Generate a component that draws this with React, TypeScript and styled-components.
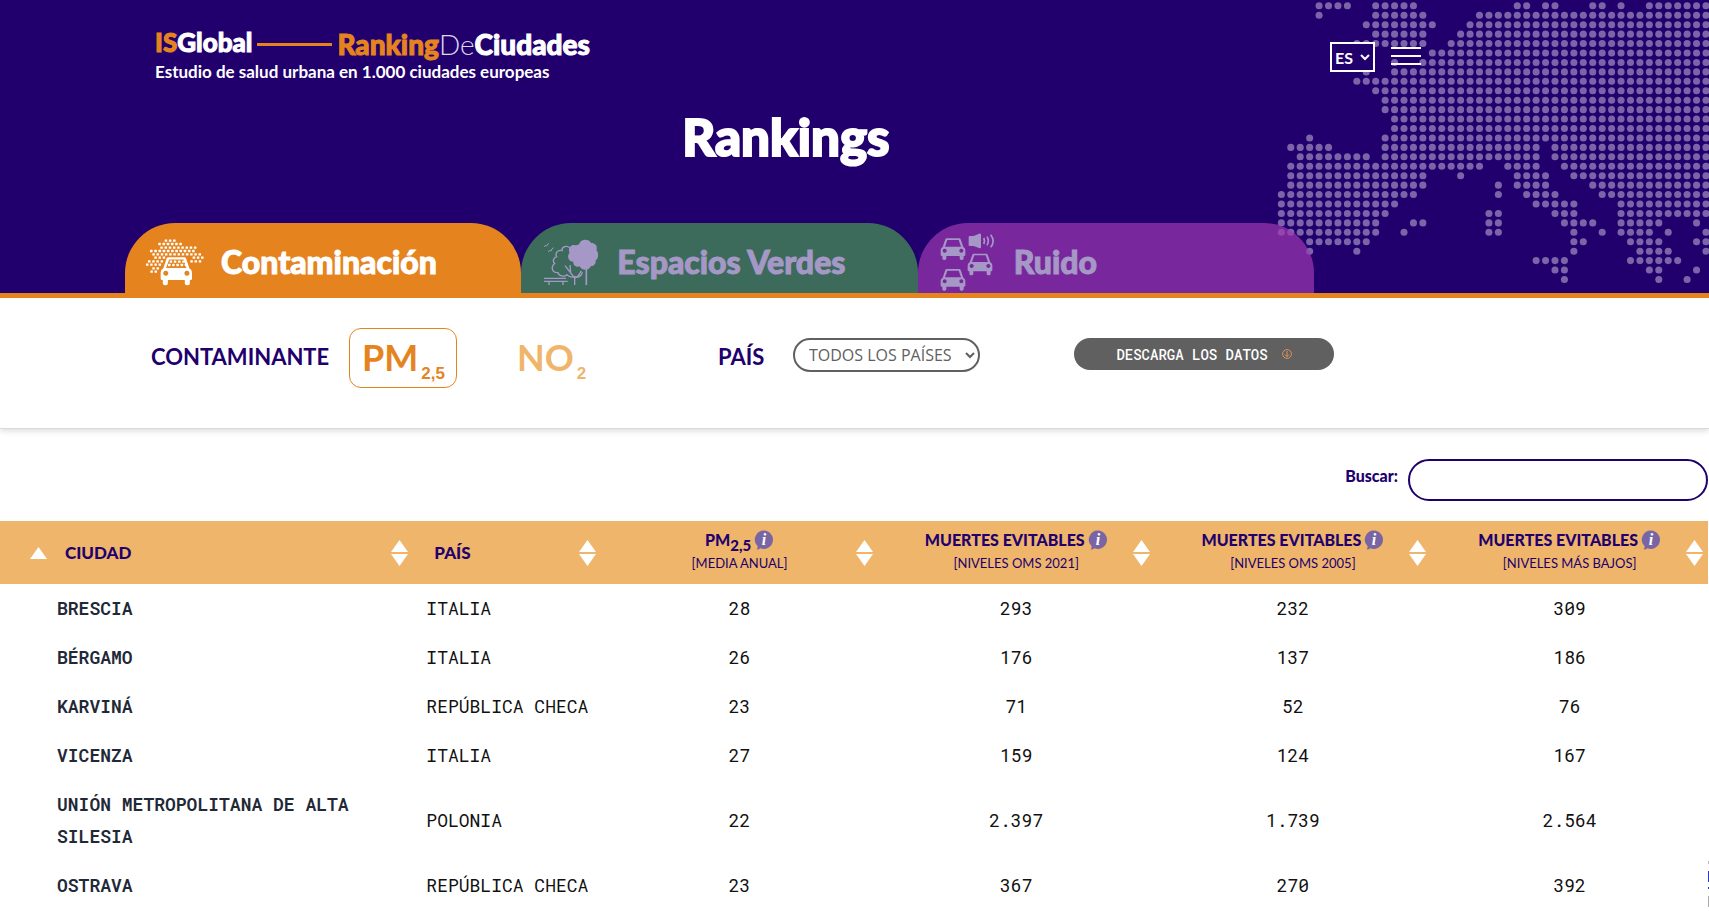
import React from "react";
import styled, { createGlobalStyle } from "styled-components";

const NAVY = "#21006d";
const ORANGE = "#e5841f";
const SAND = "#efb56b";
const LILAC = "#a598c6";
const SANS = `Lato, "Open Sans", sans-serif`;
const MONO = `"Roboto Mono", "DejaVu Sans Mono", monospace`;

const GlobalStyle = createGlobalStyle`
  *, *::before, *::after { box-sizing: border-box; }
  html { overflow: hidden auto; scrollbar-width: none; }
  body { margin: 0; background: #fff; color: ${NAVY}; font-family: ${SANS}; }
  button, select, input { font-family: inherit; margin: 0; }
`;

/* ---------- header ---------- */

const Header = styled.header`
  position: relative;
  overflow: hidden;
  background: ${NAVY};
  border-bottom: 5px solid ${ORANGE};
`;

const MapArt = styled.svg`
  position: absolute;
  top: 0;
  right: 0;
`;

const TopBar = styled.div`
  position: relative;
  display: flex;
  justify-content: space-between;
  align-items: flex-start;
  max-width: 1421px;
  padding: 28px 0 0 155px;
`;

const Brand = styled.a`
  display: block;
  color: #fff;
  text-decoration: none;
`;

const BrandLine = styled.span`
  display: flex;
  align-items: center;
  height: 32px;
  line-height: 32px;
  font-weight: 900;
  font-size: 28px;
`;

const BrandOwner = styled.span`
  font-size: 26px;
  line-height: 28px;
  height: 32px;
  -webkit-text-stroke: 1px;
`;

const Accent = styled.span`
  color: ${ORANGE};
`;

const Heavy = styled.span`
  -webkit-text-stroke: 1px;
`;

const Thin = styled.span`
  font-weight: 300;
  color: #dcd9ee;
`;

const BrandRule = styled.span`
  width: 75px;
  height: 3px;
  margin: 0 5px;
  background: ${ORANGE};
`;

const Tagline = styled.span`
  display: block;
  font-size: 17px;
  line-height: 24px;
  font-weight: 700;
`;

const Controls = styled.div`
  display: flex;
  align-items: center;
  gap: 16px;
  padding-top: 14px;
`;

const Language = styled.div`
  position: relative;
  display: flex;
  align-items: center;

  svg { position: absolute; right: 4px; pointer-events: none; }
`;

const LanguageSelect = styled.select`
  appearance: none;
  width: 45px;
  height: 30px;
  padding: 0 0 0 3px;
  border: 2px solid #fff;
  border-radius: 0;
  background: ${NAVY};
  color: #fff;
  font-size: 16px;
  font-weight: 700;
`;

const MenuButton = styled.button`
  display: grid;
  gap: 6px;
  width: 30px;
  padding: 0 0 2px;
  border: 0;
  background: none;
  cursor: pointer;

  span { height: 2px; background: #fff; }
`;

const Title = styled.h1`
  position: relative;
  max-width: 1572px;
  margin: 23px 0 0;
  color: #fff;
  font-size: 51px;
  line-height: 60px;
  font-weight: 900;
  text-align: center;
  -webkit-text-stroke: 2px;
`;

const Tabs = styled.nav`
  position: relative;
  display: grid;
  grid-template-columns: repeat(3, 1fr);
  max-width: 1314px;
  padding: 0 0 0 125px;
  margin-top: 56px;
`;

const Tab = styled.a<{ $bg: string; $fg: string }>`
  display: flex;
  align-items: center;
  height: 70px;
  padding: 8px 0 0 21px;
  gap: 16px;
  border-radius: 50px 50px 0 0;
  background: ${(p) => p.$bg};
  color: ${(p) => p.$fg};
  font-size: 32px;
  line-height: 40px;
  font-weight: 900;
  text-decoration: none;
  white-space: nowrap;
  -webkit-text-stroke: 1px;

  svg { flex: none; }
`;

/* ---------- filters ---------- */

const Filters = styled.section`
  display: grid;
  grid-template-columns: 198px 155px 214px 75px 281px 260px;
  align-items: center;
  justify-items: start;
  padding: 30px 0 40px 151px;
  border-bottom: 1px solid #d9d9d9;
  box-shadow: 0 2px 6px rgba(0, 0, 0, 0.14);
`;

const FilterLabel = styled.label`
  margin-bottom: 2px;
  font-size: 22px;
  line-height: 32px;
  font-weight: 700;
`;

const Pollutant = styled.button<{ $active?: boolean }>`
  display: flex;
  align-items: flex-end;
  gap: 3px;
  height: 60px;
  padding: 0 11px 4px 12px;
  border: 1px solid ${(p) => (p.$active ? ORANGE : "transparent")};
  border-radius: 12px;
  background: none;
  color: ${(p) => (p.$active ? ORANGE : SAND)};
  font-size: 36px;
  line-height: 52px;
  font-weight: 700;
  cursor: pointer;

  sub {
    font-family: "Liberation Sans", sans-serif;
    font-size: 17px;
    line-height: 18px;
    vertical-align: baseline;
  }
`;

const CountryField = styled.div`
  position: relative;
  display: flex;
  align-items: center;
  margin-bottom: 6px;

  svg { position: absolute; right: 4px; pointer-events: none; }
`;

const CountrySelect = styled.select`
  appearance: none;
  width: 187px;
  height: 34px;
  padding: 0 20px 0 14px;
  border: 2px solid #606060;
  border-radius: 17px;
  background: #fff;
  color: #606060;
  font-family: "Open Sans", sans-serif;
  font-size: 16px;
`;

const Download = styled.button`
  display: flex;
  align-items: center;
  justify-content: center;
  gap: 14px;
  width: 100%;
  height: 32px;
  margin-bottom: 8px;
  border: 0;
  border-radius: 16px;
  background: #606060;
  color: #fff;
  font-family: ${MONO};
  font-size: 14px;
  font-weight: 500;
  cursor: pointer;
`;

/* ---------- table ---------- */

const Main = styled.main`
  padding-right: 1px;
`;

const Search = styled.div`
  display: flex;
  justify-content: flex-end;
  align-items: center;
  gap: 10px;
  padding: 30px 0 20px;

  label {
    margin-bottom: 8px;
    font-size: 16px;
    line-height: 20px;
    font-weight: 900;
  }
`;

const SearchInput = styled.input`
  width: 300px;
  height: 42px;
  padding: 0 20px;
  border: 2px solid ${NAVY};
  border-radius: 21px;
  background: #fff;
  color: ${NAVY};
  font-size: 16px;
`;

const Table = styled.table`
  width: 100%;
  table-layout: fixed;
  border-collapse: collapse;
`;

const Col = styled.col<{ $width: string }>`
  width: ${(p) => p.$width};
`;

const HeadCell = styled.th<{ $start?: number }>`
  height: 63px;
  padding: 0 5px 0 ${(p) => p.$start ?? 0}px;
  background: ${SAND};
  font-weight: 700;
`;

const SortButton = styled.button<{ $center?: boolean }>`
  display: flex;
  align-items: center;
  gap: 18px;
  width: 100%;
  padding: 0;
  border: 0;
  background: none;
  color: ${NAVY};
  font-size: ${(p) => (p.$center ? 16 : 17)}px;
  line-height: 24px;
  font-weight: 900;
  cursor: pointer;

  > span {
    flex: 1;
    padding: ${(p) => (p.$center ? "0 0 4px 22px" : "0")};
    margin-right: ${(p) => (p.$center ? -18 : 0)}px;
    text-align: ${(p) => (p.$center ? "center" : "left")};
    white-space: nowrap;
  }
  svg { flex: none; }
`;

const HeadName = styled.span`
  display: flex;
  justify-content: center;
  align-items: center;
  gap: 3px;

  sub { font-size: 15px; line-height: 0; vertical-align: -5px; }
`;

const HeadNote = styled.small`
  display: block;
  font-size: 13px;
  line-height: 22px;
  font-weight: 400;
`;

const Cell = styled.td<{ $start?: number }>`
  height: 49px;
  padding: 8px 0 9px ${(p) => p.$start ?? 0}px;
  color: #111;
  font-family: ${MONO};
  font-size: 18px;
  line-height: 32px;
  text-align: ${(p) => (p.$start ? "left" : "center")};
`;

const CityCell = styled(Cell).attrs({ as: "th" })`
  padding-right: 24px;
  color: #1f2937;
  font-weight: 600;
`;

const SideBadge = styled.aside`
  position: fixed;
  right: 0;
  bottom: 4px;
  width: 1px;
  height: 46px;
  background: linear-gradient(#bbb 0 3px, #fff 3px 10px, #2b3bb8 10px 21px, #fff 21px 26px, #2b3bb8 26px 28px, #fff 28px 35px, #aaa 35px);
`;

/* ---------- drawings ---------- */

/* Each row lists the [first, last] columns that hold a dot. */
const MAP_ROWS: number[][][] = [
  [[4, 7], [10, 14], [25, 26], [28, 29], [33, 34], [36, 36], [39, 45]],
  [[4, 4], [10, 15], [21, 45]],
  [[9, 16], [20, 45]],
  [[10, 15], [19, 45]],
  [[8, 15], [18, 45]],
  [[16, 45]],
  [[12, 12], [15, 45]],
  [[9, 9], [12, 45]],
  [[8, 45]],
  [[10, 45]],
  [[11, 45]],
  [[11, 45]],
  [[12, 45]],
  [[12, 45]],
  [[3, 3], [11, 45]],
  [[1, 5], [11, 27], [29, 45]],
  [[2, 9], [11, 27], [29, 45]],
  [[1, 21], [24, 27], [30, 45]],
  [[1, 15], [19, 19], [25, 28], [31, 45]],
  [[1, 15], [23, 23], [25, 28], [33, 45]],
  [[0, 14], [23, 23], [26, 29], [34, 45]],
  [[0, 12], [27, 31], [36, 45]],
  [[0, 11], [22, 23], [29, 31], [36, 45]],
  [[0, 10], [14, 15], [22, 23], [30, 33], [36, 40], [44, 44]],
  [[0, 10], [13, 13], [22, 23], [31, 31], [34, 34], [36, 39], [41, 41], [45, 45]],
  [[3, 9], [31, 32], [37, 40], [44, 45]],
  [[3, 3], [8, 8], [31, 31], [38, 41], [45, 45]],
  [[27, 30], [37, 42]],
  [[29, 30], [39, 40], [44, 44]],
  [[30, 30], [40, 40], [43, 43]],
];

const range = (a: number, b: number) => Array.from({ length: b - a + 1 }, (_, i) => a + i);

const EuropeMap = () => (
  <MapArt width="449" height="293" viewBox="0 0 1347 879" aria-hidden="true">
    <g fill="#7b65a8">
      {MAP_ROWS.map((spans, r) =>
        spans.flatMap(([a, b]) =>
          range(a, b).map((c) => (
            <circle key={`${r}-${c}`} cx={64 + c * 28.31} cy={17.5 + r * 28.31} r="10.6" />
          ))
        )
      )}
    </g>
  </MapArt>
);

const CAR =
  "M18 0H56Q59 0 60 3L68 26Q74 29 74 35V50Q74 53 70 53H69V60Q69 65 64 65H62Q57 65 57 60V53H17V60Q17 65 12 65H10Q5 65 5 60V53H4Q0 53 0 50V35Q0 29 6 26L14 3Q15 0 18 0ZM20 5L13 25H61L54 5ZM12 31a6 6 0 1 0 .1 0ZM62 31a6 6 0 1 0 .1 0Z";

const SMOKE: [number, number, number][] = [
  [94, 168, 3], [104, 149, 6], [115, 155, 9], [125, 124, 1], [125, 137, 10],
  [135, 131, 12], [145, 137, 3], [145, 252, 3], [156, 118, 4], [156, 245, 3],
  [166, 112, 4], [177, 131, 2], [187, 125, 2], [157, 183, 4], [167, 178, 5],
];

const PollutionIcon = () => (
  <svg width="59" height="47" viewBox="108 89 177 141" fill="#fff" aria-hidden="true">
    {SMOKE.flatMap(([y, x, n]) =>
      range(0, n - 1).map((i) => (
        <rect key={`${y}-${x}-${i}`} x={x - 4 + i * 12.6} y={y - 3.5} width="7.5" height="7" rx="1" />
      ))
    )}
    <path transform="translate(152 144) scale(1.27 1.29)" fillRule="evenodd" d={CAR} />
  </svg>
);

const ParkIcon = () => (
  <svg width="59" height="47" viewBox="96 89 177 141" fill="none" stroke={LILAC} strokeWidth="4" aria-hidden="true">
    <path
      fill={LILAC}
      stroke="none"
      d="M208 103C212 88 238 88 243 101C256 100 264 112 259 122C267 130 266 147 257 153C258 166 250 171 243 170C239 184 214 185 209 171C199 175 188 167 190 157C174 156 170 138 179 131C172 118 183 104 195 108C200 108 205 107 208 103Z"
    />
    <path d="M229 178V227" strokeWidth="5" />
    <path d="M180 116C170 106 155 113 156 124C144 120 134 132 140 142C130 145 127 157 134 162C122 172 125 191 144 190C146 200 163 204 171 196C176 202 188 205 194 202C204 206 216 200 217 188" />
    <path d="M194 227V206M194 206L165 169M182 190L180 167M194 206Q205 203 214 184" />
    <path d="M102 207H168M102 216H173M117 216V227M159 216V227" />
    <path d="M102 112Q107 106 110 110Q111 105 117 102M114 127Q120 121 123 125Q124 118 131 115" strokeWidth="3" />
  </svg>
);

const NoiseIcon = () => (
  <svg width="59" height="60" viewBox="88 68 177 180" fill={LILAC} aria-hidden="true">
    <path transform="translate(93 87)" fillRule="evenodd" d={CAR} />
    <path transform="translate(174 133)" fillRule="evenodd" d={CAR} />
    <path transform="translate(93 179)" fillRule="evenodd" d={CAR} />
    <path d="M180 80H192L208 73Q214 71 214 76V113Q214 119 208 116L192 110H180Q177 110 177 107V83Q177 80 180 80Z" />
    <g fill="none" stroke={LILAC} strokeWidth="5">
      <path d="M222 86Q227 95 222 104" />
      <path d="M232 82Q240 95 232 108" />
      <path d="M243 76Q258 95 243 114" />
    </g>
  </svg>
);

const Chevron = ({ color }: { color: string }) => (
  <svg width="12" height="12" viewBox="0 0 12 12" fill="none" stroke={color} strokeWidth="2" aria-hidden="true">
    <path d="M2 4L6 8L10 4" />
  </svg>
);

const DownloadIcon = () => (
  <svg width="10" height="10" viewBox="0 0 10 10" fill="none" stroke="#d9925a" aria-hidden="true">
    <circle cx="5" cy="5" r="4.4" />
    <path d="M5 2V8M3 5.5L5 7.7L7 5.5" />
  </svg>
);

const InfoIcon = () => (
  <svg width="20" height="20" viewBox="0 0 20 20" aria-hidden="true">
    <path fill="#7965a4" d="M10 0.5A9.2 9.2 0 1 1 6.5 18.3Q5 19.6 2.6 19.6Q3.8 18 3.6 16.3A9.2 9.2 0 0 1 10 .5Z" />
    <text x="10" y="15" textAnchor="middle" fill="#fff" fontFamily="Liberation Serif, serif" fontSize="16" fontStyle="italic" fontWeight="700">
      i
    </text>
  </svg>
);

const SortIcon = () => (
  <svg width="17" height="26" viewBox="0 0 17 26" fill="#fff" aria-hidden="true">
    <path d="M8.500 0L17 12H0ZM0 14H17L8.500 26Z" />
  </svg>
);

const SortUpIcon = () => (
  <svg width="17" height="12" viewBox="0 0 17 12" fill="#fff" aria-hidden="true">
    <path d="M8.500 0L17 12H0Z" />
  </svg>
);

/* ---------- data ---------- */

const ROWS = [
  ["BRESCIA", "ITALIA", "28", "293", "232", "309"],
  ["BÉRGAMO", "ITALIA", "26", "176", "137", "186"],
  ["KARVINÁ", "REPÚBLICA CHECA", "23", "71", "52", "76"],
  ["VICENZA", "ITALIA", "27", "159", "124", "167"],
  ["UNIÓN METROPOLITANA DE ALTA SILESIA", "POLONIA", "22", "2.397", "1.739", "2.564"],
  ["OSTRAVA", "REPÚBLICA CHECA", "23", "367", "270", "392"],
];

const METRICS: { name: React.ReactNode; note: string }[] = [
  { name: <>PM<sub>2,5</sub></>, note: "[MEDIA ANUAL]" },
  { name: "MUERTES EVITABLES", note: "[NIVELES OMS 2021]" },
  { name: "MUERTES EVITABLES", note: "[NIVELES OMS 2005]" },
  { name: "MUERTES EVITABLES", note: "[NIVELES MÁS BAJOS]" },
];

export default function App() {
  return (
    <>
      <GlobalStyle />
      <Header>
        <EuropeMap />
        <TopBar>
          <Brand href="#">
            <BrandLine>
              <BrandOwner><Accent>IS</Accent>Global</BrandOwner>
              <BrandRule />
              <span><Heavy><Accent>Ranking</Accent></Heavy><Thin>De</Thin><Heavy>Ciudades</Heavy></span>
            </BrandLine>
            <Tagline>Estudio de salud urbana en 1.000 ciudades europeas</Tagline>
          </Brand>
          <Controls>
            <Language>
              <LanguageSelect aria-label="Idioma" defaultValue="ES">
                <option>ES</option>
                <option>EN</option>
                <option>CA</option>
              </LanguageSelect>
              <Chevron color="#fff" />
            </Language>
            <MenuButton aria-label="Menú"><span /><span /><span /></MenuButton>
          </Controls>
        </TopBar>
        <Title>Rankings</Title>
        <Tabs>
          <Tab href="#contaminacion" $bg={ORANGE} $fg="#fff"><PollutionIcon />Contaminación</Tab>
          <Tab href="#verdes" $bg="#3d6b5b" $fg={LILAC}><ParkIcon />Espacios Verdes</Tab>
          <Tab href="#ruido" $bg="rgba(160, 55, 176, 0.7)" $fg={LILAC}><NoiseIcon />Ruido</Tab>
        </Tabs>
      </Header>

      <Filters>
        <FilterLabel as="span">CONTAMINANTE</FilterLabel>
        <Pollutant $active>PM<sub>2,5</sub></Pollutant>
        <Pollutant>NO<sub>2</sub></Pollutant>
        <FilterLabel htmlFor="pais">PAÍS</FilterLabel>
        <CountryField>
          <CountrySelect id="pais" defaultValue="TODOS LOS PAÍSES">
            <option>TODOS LOS PAÍSES</option>
            <option>ITALIA</option>
            <option>POLONIA</option>
          </CountrySelect>
          <Chevron color="#606060" />
        </CountryField>
        <Download>DESCARGA LOS DATOS<DownloadIcon /></Download>
      </Filters>

      <Main>
        <Search>
          <label htmlFor="buscar">Buscar:</label>
          <SearchInput id="buscar" type="search" />
        </Search>
        <Table>
          <colgroup>
            <Col $width="24.2%" />
            <Col $width="11%" />
            <Col $width="16.2%" />
            <Col $width="16.2%" />
            <Col $width="16.2%" />
            <Col $width="16.2%" />
          </colgroup>
          <thead>
            <tr>
              <HeadCell $start={30} scope="col">
                <SortButton><SortUpIcon /><span>CIUDAD</span><SortIcon /></SortButton>
              </HeadCell>
              <HeadCell $start={21} scope="col">
                <SortButton><span>PAÍS</span><SortIcon /></SortButton>
              </HeadCell>
              {METRICS.map((m) => (
                <HeadCell key={m.note} scope="col">
                  <SortButton $center>
                    <span>
                      <HeadName><span>{m.name}</span><InfoIcon /></HeadName>
                      <HeadNote>{m.note}</HeadNote>
                    </span>
                    <SortIcon />
                  </SortButton>
                </HeadCell>
              ))}
            </tr>
          </thead>
          <tbody>
            {ROWS.map(([city, country, ...values]) => (
              <tr key={city}>
                <CityCell $start={57} scope="row">{city}</CityCell>
                <Cell $start={13}>{country}</Cell>
                {values.map((v, i) => <Cell key={i}>{v}</Cell>)}
              </tr>
            ))}
          </tbody>
        </Table>
      </Main>
      <SideBadge aria-hidden="true" />
    </>
  );
}
